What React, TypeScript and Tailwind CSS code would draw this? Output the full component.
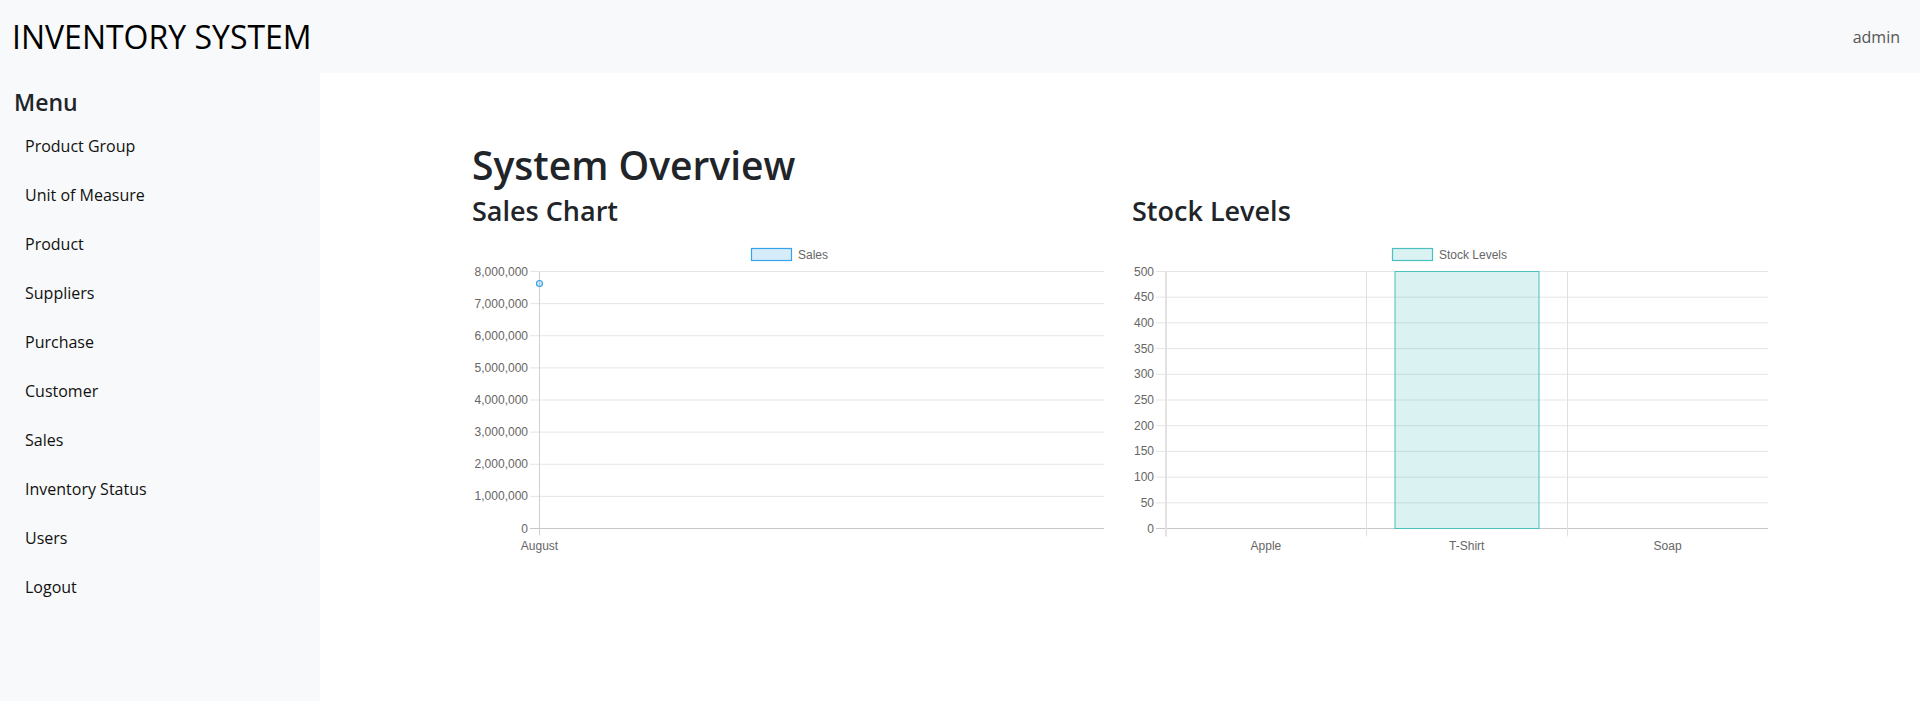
import { FC } from "react";

// Sidebar links
const menuItems: string[] = [
  "Product Group",
  "Unit of Measure",
  "Product",
  "Suppliers",
  "Purchase",
  "Customer",
  "Sales",
  "Inventory Status",
  "Users",
  "Logout",
];

const chartFont = "'Liberation Sans', Arial, sans-serif";

// Line chart: one point for August
const SalesChart: FC = () => {
  const top = 33.5;
  const bottom = 290.5;
  const step = (bottom - top) / 8;
  const ticks = [8, 7, 6, 5, 4, 3, 2, 1, 0];

  return (
    <svg width="636" height="318" viewBox="0 0 636 318" className="block">
      {/* legend */}
      <rect x="279.5" y="10.5" width="40" height="12" fill="rgba(54,162,235,0.2)" stroke="#36a2eb" strokeWidth="1.2" />
      <text x="326" y="20.5" fontSize="12" fill="#666" fontFamily={chartFont}>
        Sales
      </text>

      {/* grid */}
      {ticks.map((t, i) => {
        const y = top + i * step;
        return (
          <g key={t}>
            <line x1="58" x2="632" y1={y} y2={y} stroke={t === 0 ? "#c8c8c8" : "#e5e5e5"} strokeWidth="1" />
            <text x="56" y={y + 4} textAnchor="end" fontSize="12" fill="#666" fontFamily={chartFont}>
              {t === 0 ? "0" : `${t},000,000`}
            </text>
          </g>
        );
      })}
      <line x1="67.5" x2="67.5" y1={top} y2="297.5" stroke="#cfcfcf" strokeWidth="1" />
      <text x="67.5" y="312" textAnchor="middle" fontSize="12" fill="#666" fontFamily={chartFont}>
        August
      </text>

      {/* data point */}
      <circle cx="67.5" cy="45.5" r="3" fill="rgba(54,162,235,0.2)" stroke="#36a2eb" strokeWidth="1.2" />
    </svg>
  );
};

// Bar chart: three products
const StockChart: FC = () => {
  const top = 33.5;
  const bottom = 290.5;
  const step = (bottom - top) / 10;
  const ticks = [500, 450, 400, 350, 300, 250, 200, 150, 100, 50, 0];
  const left = 33.5;
  const catW = (636 - left) / 3;
  const labels = ["Apple", "T-Shirt", "Soap"];

  return (
    <svg width="636" height="318" viewBox="0 0 636 318" className="block">
      {/* legend */}
      <rect x="260.5" y="10.5" width="40" height="12" fill="rgba(75,192,192,0.2)" stroke="#4bc0c0" strokeWidth="1.2" />
      <text x="307" y="20.5" fontSize="12" fill="#666" fontFamily={chartFont}>
        Stock Levels
      </text>

      {/* grid */}
      {ticks.map((t, i) => {
        const y = top + i * step;
        return (
          <g key={t}>
            <line x1="24" x2="636" y1={y} y2={y} stroke={t === 0 ? "#c8c8c8" : "#e5e5e5"} strokeWidth="1" />
            <text x="22" y={y + 4} textAnchor="end" fontSize="12" fill="#666" fontFamily={chartFont}>
              {t}
            </text>
          </g>
        );
      })}
      {[1, 2].map((k) => (
        <line
          key={k}
          x1={Math.round(left + k * catW) + 0.5}
          x2={Math.round(left + k * catW) + 0.5}
          y1={top}
          y2="298.5"
          stroke="#e0e0e0"
          strokeWidth="1"
        />
      ))}
      <line x1="34" x2="34" y1={top} y2="298.5" stroke="#e3e3e3" strokeWidth="2" />

      {/* T-Shirt bar */}
      <rect x="263" y={top} width="144" height={bottom - top} fill="rgba(75,192,192,0.2)" stroke="#4bc0c0" strokeWidth="1" />

      {labels.map((l, i) => (
        <text
          key={l}
          x={left + catW * (i + 0.5)}
          y="312"
          textAnchor="middle"
          fontSize="12"
          fill="#666"
          fontFamily={chartFont}
        >
          {l}
        </text>
      ))}
    </svg>
  );
};

const App: FC = () => {
  return (
    <div className="min-h-screen w-full bg-white font-['Open_Sans',sans-serif] text-[#212529]">
      {/* Top bar */}
      <header className="flex h-[73px] items-center justify-between bg-[#f8f9fa] pl-3 pr-5">
        <span className="text-[32px] leading-none text-black">INVENTORY SYSTEM</span>
        <span className="text-base text-[#555]">admin</span>
      </header>

      <div className="flex min-h-[628px]">
        {/* Sidebar */}
        <aside className="w-[320px] shrink-0 bg-[#f8f9fa] pl-[14px] pt-[16px]">
          <h4 className="mb-[5px] text-[23px] font-semibold leading-[1.2]">Menu</h4>
          <ul>
            {menuItems.map((item) => (
              <li key={item} className="flex h-[49px] items-center pl-[11px] text-base text-[#111]">
                {item}
              </li>
            ))}
          </ul>
        </aside>

        {/* Main */}
        <main className="flex-1">
          <div className="mx-auto w-[1320px] px-3 pt-[69px]">
            <h1 className="text-[39px] font-semibold leading-[1.2]">System Overview</h1>
            <div className="mt-[6px] grid grid-cols-2 gap-6">
              <div>
                <h3 className="mb-[11px] text-[27px] font-semibold leading-[1.2]">Sales Chart</h3>
                <SalesChart />
              </div>
              <div>
                <h3 className="mb-[11px] text-[27px] font-semibold leading-[1.2]">Stock Levels</h3>
                <StockChart />
              </div>
            </div>
          </div>
        </main>
      </div>
    </div>
  );
};

export default App;
